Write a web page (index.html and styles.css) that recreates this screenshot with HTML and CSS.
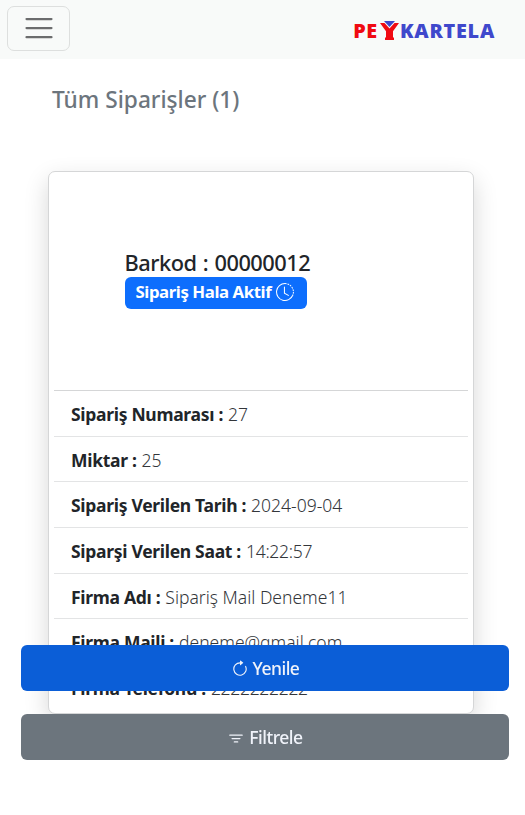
FILE: index.html
```html
<!DOCTYPE html>
<html lang="tr">
<head>
<meta charset="utf-8">
<meta name="viewport" content="width=device-width, initial-scale=1">
<title>Tüm Siparişler</title>
<link rel="stylesheet" href="styles.css">
</head>
<body>
<header class="navbar">
  <button class="toggler" aria-label="Menü">
    <svg width="34" height="34" viewBox="0 0 30 30" fill="none" stroke="#6b6c6d" stroke-width="2" stroke-linecap="round"><path d="M4 6.200h22M4 14.200h22M4 22.200h22"/></svg>
  </button>
  <div class="brand">
    <span class="brand-pe">PE</span>
    <svg class="brand-mark" width="19" height="19" viewBox="0 0 19 19"><path fill="#f00a12" d="M0 2h4.500l5 5.500 5-5.500H19l-6 8.300V16.500h1V19H5v-2.500h1v-6.200z"/><path fill="#3f48cc" d="M4 0h11L9.500 6z"/></svg>
    <span class="brand-kartela">KARTELA</span>
  </div>
</header>
<main class="page">
  <h1 class="title">Tüm Siparişler (1)</h1>
  <article class="card">
    <div class="card-head">
      <h2 class="barcode">Barkod : 00000012</h2>
      <span class="badge"><span>Sipariş Hala Aktif</span>
        <svg width="18" height="18" viewBox="0 0 16 16" fill="none" stroke="currentColor" stroke-width=".9"><path d="M8 .5a7.500 7.500 0 1 0 6.900 10.400"/><path stroke-dasharray="1.500 .8" d="M8 .5a7.500 7.500 0 0 1 6.900 10.400"/><path stroke-linecap="round" d="M7.500 3.500V9l3.500 2"/></svg>
      </span>
    </div>
    <ul class="details">
      <li><b>Sipariş Numarası :</b><span>27</span></li>
      <li><b>Miktar :</b><span>25</span></li>
      <li><b>Sipariş Verilen Tarih :</b><span>2024-09-04</span></li>
      <li><b>Siparşi Verilen Saat :</b><span class="time">14:22:57</span></li>
      <li><b>Firma Adı :</b><span>Sipariş Mail Deneme11</span></li>
      <li><b>Firma Maili :</b><span>deneme@gmail.com</span></li>
      <li><b>Firma Telefonu :</b><span class="phone">2222222222</span></li>
    </ul>
  </article>
</main>
<div class="actions">
  <button class="btn btn-primary">
    <svg class="icon-refresh" width="18" height="18" viewBox="0 0 16 16" fill="currentColor"><path fill-rule="evenodd" d="M8 3a5 5 0 1 0 4.546 2.914.5.5 0 0 1 .908-.417A6 6 0 1 1 8 2z"/><path d="M8 4.466V.534a.25.25 0 0 1 .410-.192l2.360 1.966c.12.100.12.284 0 .384L8.410 4.658A.25.25 0 0 1 8 4.466"/></svg>
    <span>Yenile</span>
  </button>
  <button class="btn btn-secondary">
    <svg class="icon-filter" width="18" height="18" viewBox="0 0 16 16" fill="none" stroke="currentColor" stroke-width="1.100" stroke-linecap="round"><path d="M2.500 5.500h11M4.500 8.500h7M6.500 11.500h3"/></svg>
    <span>Filtrele</span>
  </button>
</div>
</body>
</html>
```
FILE: styles.css
```css
* { box-sizing: border-box; }
body {
  margin: 0;
  height: 815px;
  overflow: hidden;
  background: #fff;
  color: #212529;
  font: 400 17.5px/26px "Noto Sans", "Open Sans", sans-serif;
}
.navbar {
  display: flex;
  justify-content: space-between;
  height: 59px;
  padding: 6px 30px 0 7px;
  background: #f8faf9;
}
.toggler {
  display: flex;
  align-items: center;
  justify-content: center;
  width: 63px;
  height: 45px;
  padding: 0;
  border: 1px solid #dddfde;
  border-radius: 7px;
  background: transparent;
}
.brand {
  display: flex;
  align-items: center;
  height: 50px;
  font: 800 19.8px/24px "Open Sans", sans-serif;
  letter-spacing: .75px;
}
.brand-pe { color: #f00a12; }
.brand-kartela { color: #3f48cc; }
.brand-mark { margin: -2px 1px 0 2px; }
.title {
  margin: 0;
  padding: 26px 0 0 52px;
  color: #6c757d;
  font-size: 22.700px;
  font-weight: 500;
  line-height: 30px;
}
.card {
  width: 426px;
  height: 543px;
  margin: 56px 0 0 47.5px;
  padding: 0 5px;
  border: 1px solid #d5d6d7;
  border-radius: 7px;
  background: #fff;
  box-shadow: 0 9px 24px rgba(0, 0, 0, .16);
}
.card-head {
  display: flex;
  flex-direction: column;
  align-items: flex-start;
  height: 218px;
  padding: 77px 0 0 71px;
}
.barcode {
  margin: 0;
  font-size: 21.8px;
  font-weight: 500;
  line-height: 28px;
  letter-spacing: -.48px;
  word-spacing: 1px;
  white-space: nowrap;
}
.badge {
  display: flex;
  align-items: center;
  gap: 5px;
  width: 182px;
  height: 32px;
  padding: 0 11px 2px;
  border-radius: 6px;
  background: #0d6efd;
  color: #fff;
  font-size: 16.8px;
  font-weight: 700;
  letter-spacing: -.42px;
  white-space: nowrap;
}
.badge svg { flex: none; }
.details {
  margin: 0;
  padding: 0;
  list-style: none;
}
.details li {
  display: flex;
  gap: 5px;
  height: 45.700px;
  padding: 10px 17.5px 0;
  border-top: 1px solid #e3e4e5;
  white-space: nowrap;
}
.details li:first-child { border-color: #d5d6d7; }
.details b {
  font-weight: 700;
  letter-spacing: -.3px;
}
.details span { font-weight: 300; color: #33363a; }
.details .time { letter-spacing: -.3px; }
.details .phone { letter-spacing: -.3px; }
.actions {
  position: fixed;
  top: 645px;
  left: 21px;
  display: grid;
  gap: 23px;
  width: 488px;
}
.btn {
  display: flex;
  align-items: center;
  justify-content: center;
  gap: 4px;
  height: 46px;
  padding: 0;
  border: 0;
  border-radius: 6px;
  color: #f0f3fa;
  font: 500 17.500px/26px "Noto Sans", "Open Sans", sans-serif;
  letter-spacing: -.5px;
}
.btn-primary { background: #0b5ed7; }
.btn-secondary { background: #6c757d; }
.icon-refresh { margin-top: 2px; }
.icon-filter { margin-top: 1px; }
```
